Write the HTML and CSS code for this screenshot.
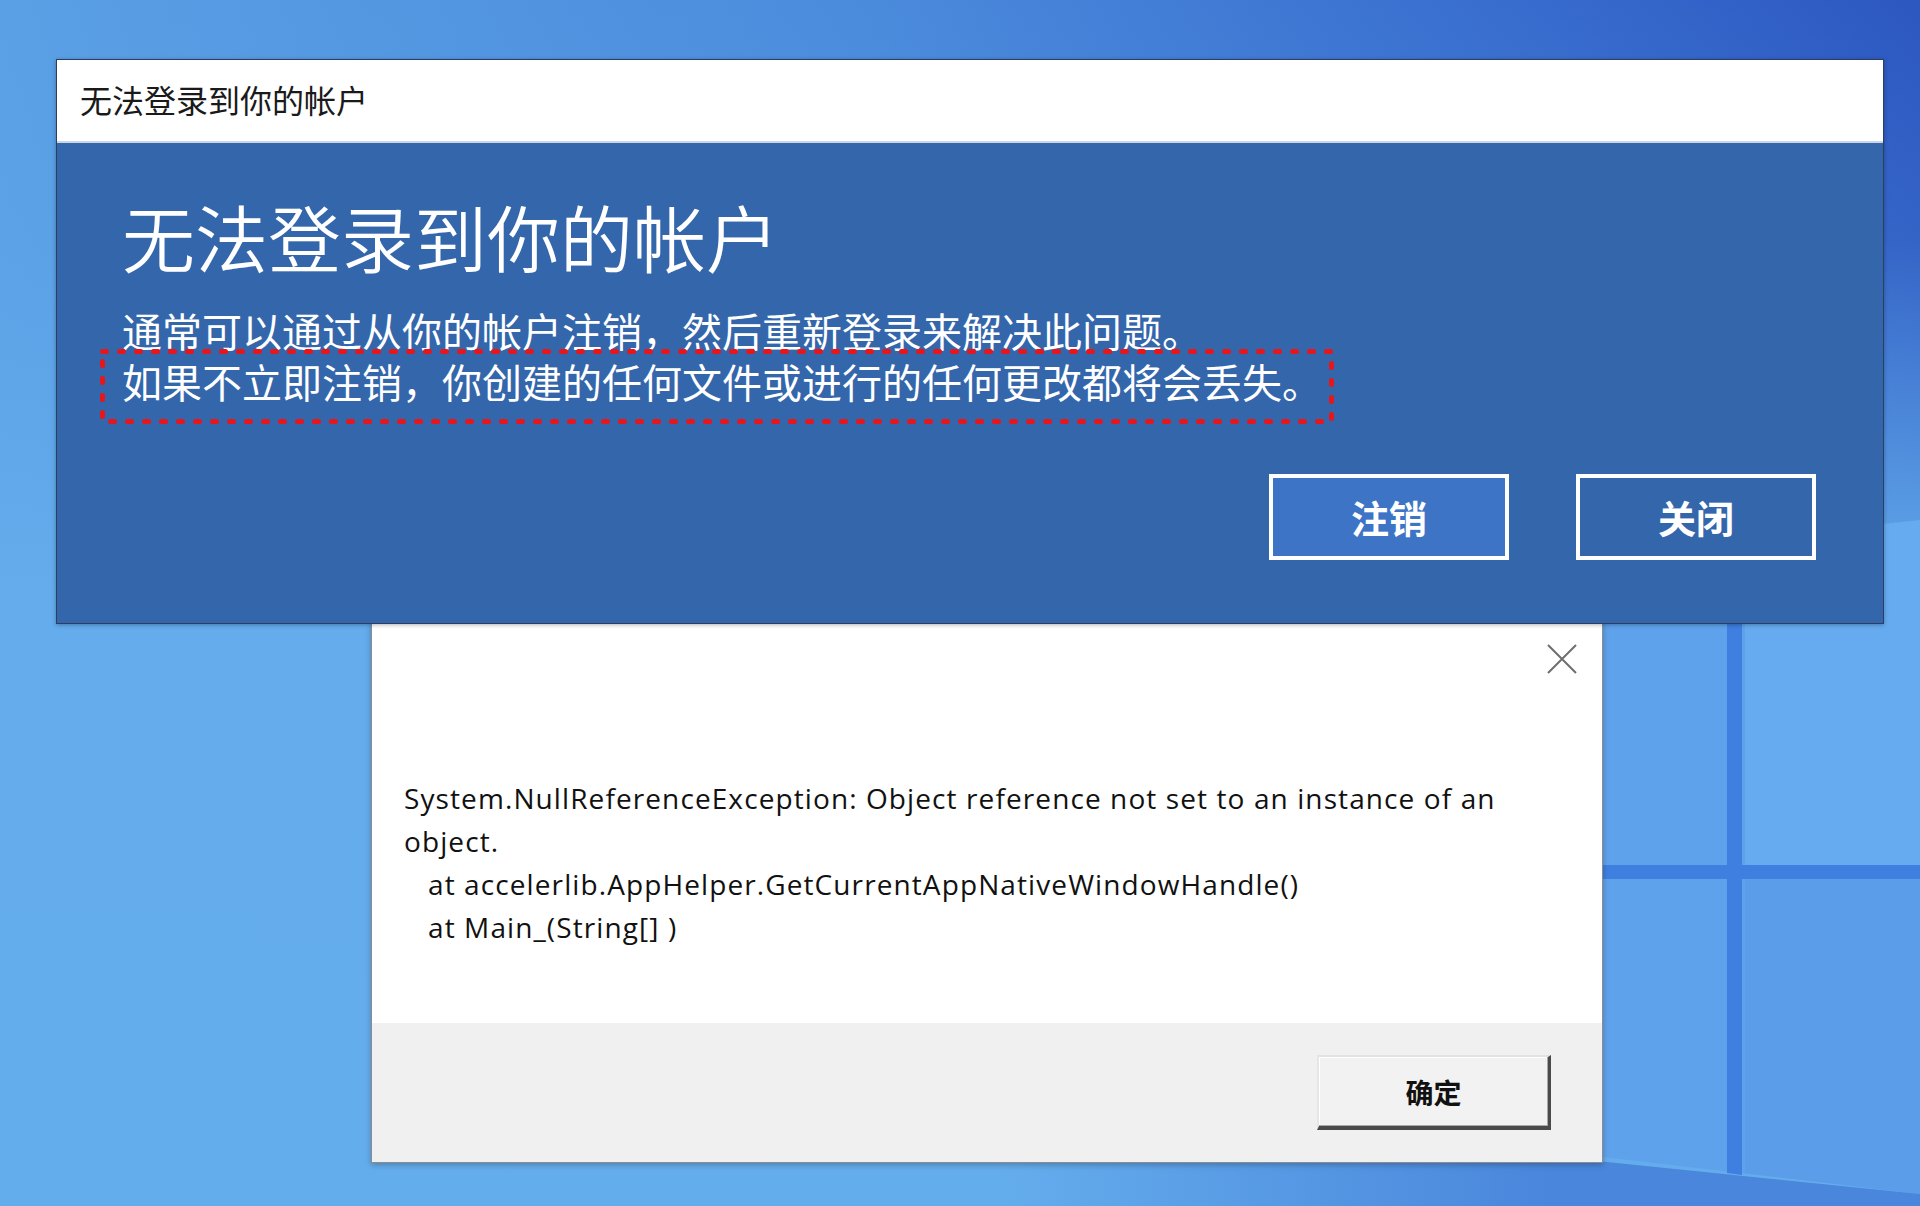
FILE: index.html
```html
<!DOCTYPE html>
<html lang="zh-CN">
<head>
<meta charset="utf-8">
<title>无法登录到你的帐户</title>
<link rel="stylesheet" href="styles.css">
</head>
<body>
<div class="desktop">
  <svg class="wallpaper" viewBox="0 0 1920 1206" preserveAspectRatio="none" aria-hidden="true">
    <defs>
      <linearGradient id="sky" x1="0" y1="0" x2="1" y2="0">
        <stop offset="0" stop-color="#5aa0e5"/>
        <stop offset="0.45" stop-color="#4b8bdc"/>
        <stop offset="0.75" stop-color="#3a70d0"/>
        <stop offset="1" stop-color="#2c57c0"/>
      </linearGradient>
      <linearGradient id="fade" x1="0" y1="0" x2="0" y2="1">
        <stop offset="0" stop-color="#64acec" stop-opacity="0"/>
        <stop offset="0.2" stop-color="#64acec" stop-opacity="0.15"/>
        <stop offset="0.5" stop-color="#64acec" stop-opacity="1"/>
        <stop offset="1" stop-color="#64adec" stop-opacity="1"/>
      </linearGradient>
      <linearGradient id="floor" x1="0" y1="0" x2="1" y2="0">
        <stop offset="0" stop-color="#4a86dc" stop-opacity="0"/>
        <stop offset="0.6" stop-color="#4a86dc" stop-opacity="1"/>
        <stop offset="1" stop-color="#4a86dc" stop-opacity="1"/>
      </linearGradient>
    </defs>
    <rect width="1920" height="1206" fill="url(#sky)"/>
    <rect width="1920" height="1206" fill="url(#fade)"/>
    <polygon points="1500,560 1920,520 1920,1194 1500,1145" fill="#5fa2ec"/>
    <polygon points="1745,540 1920,520 1920,865 1745,865" fill="#66abef"/>
    <polygon points="1745,879 1920,879 1920,1194 1745,1173" fill="#5b9de9"/>
    <polygon points="1727,540 1742,538 1742,1175 1727,1173" fill="#3f7fe0"/>
    <rect x="1500" y="865" width="420" height="14" fill="#3f7fe0"/>
    <polygon points="1000,1100 1920,1194 1920,1206 1000,1206" fill="url(#floor)"/>
  </svg>

  <section class="win err">
    <div class="err-body">
      <div class="err-head">
        <button class="close" aria-label="关闭">
          <svg viewBox="0 0 30 30" width="30" height="30"><path d="M1 1 L29 29 M29 1 L1 29" stroke="#6e6e6e" stroke-width="2" fill="none"/></svg>
        </button>
      </div>
      <div class="msg">
        <p class="exc">System.NullReferenceException: Object reference not set to an instance of an object.</p>
        <p class="frame">at accelerlib.AppHelper.GetCurrentAppNativeWindowHandle()</p>
        <p class="frame">at Main_(String[] )</p>
      </div>
    </div>
    <div class="err-foot">
      <button class="ok">确定</button>
    </div>
  </section>

  <section class="win signin">
    <header class="titlebar">无法登录到你的帐户</header>
    <div class="signin-body">
      <h1 class="heading">无法登录到你的帐户</h1>
      <div class="desc">
        <p>通常可以通过从你的帐户注销，然后重新登录来解决此问题。</p>
        <p class="warn">如果不立即注销，你创建的任何文件或进行的任何更改都将会丢失。<svg class="mark" width="1234" height="75" aria-hidden="true"><rect x="2.5" y="2.5" width="1229" height="70" fill="none" stroke="#e8161b" stroke-width="5" stroke-dasharray="4 13" stroke-linecap="round"/></svg></p>
      </div>
      <div class="actions">
        <button class="btn primary">注销</button>
        <button class="btn">关闭</button>
      </div>
    </div>
  </section>
</div>
</body>
</html>
```

FILE: styles.css
```css
html, body {
  margin: 0;
  padding: 0;
  width: 1920px;
  height: 1206px;
  overflow: hidden;
  background: #4f91de;
}

.desktop {
  position: relative;
  width: 1920px;
  height: 1206px;
  overflow: hidden;
}

.wallpaper {
  position: absolute;
  left: 0;
  top: 0;
  width: 1920px;
  height: 1206px;
  display: block;
}

.win {
  position: absolute;
  box-sizing: border-box;
}

/* ---------- sign-in dialog ---------- */
.signin {
  left: 56px;
  top: 59px;
  width: 1828px;
  height: 565px;
  border: 1px solid #2a3f63;
  background: #3466ab;
  display: flex;
  flex-direction: column;
  box-shadow: 0 1px 4px rgba(0, 0, 0, 0.3);
  z-index: 2;
}

.titlebar {
  box-sizing: border-box;
  height: 83px;
  background: #fff;
  border-bottom: 2px solid #c9d6e8;
  display: flex;
  align-items: center;
  padding-left: 23px;
  padding-bottom: 3px;
  font: 400 32px/1 "Noto Sans CJK SC", sans-serif;
  color: #1a1a1a;
}

.signin-body {
  flex: 1;
  display: flex;
  flex-direction: column;
  padding: 55px 67px 0 65px;
  color: #fff;
  font-family: "Noto Sans CJK SC", sans-serif;
}

.heading {
  margin: 0;
  font-weight: 350;
  font-size: 73px;
  line-height: 74px;
  color: #fff;
}

.desc {
  margin-top: 33px;
}

.desc p {
  margin: 0;
  font-size: 40px;
  line-height: 51px;
  font-weight: 400;
  white-space: nowrap;
}

.warn {
  position: relative;
}

.mark {
  position: absolute;
  left: -22px;
  top: -7px;
}

.actions {
  margin-top: 67px;
  display: flex;
  justify-content: flex-end;
  gap: 67px;
}

.btn {
  box-sizing: border-box;
  width: 240px;
  height: 86px;
  border: 4px solid #fff;
  background: #3466ab;
  color: #fff;
  font: 700 38px/1 "Noto Sans CJK SC", sans-serif;
  padding: 0;
}

.btn.primary {
  background: #3d74c6;
}

/* ---------- error dialog ---------- */
.err {
  left: 371px;
  top: 600px;
  width: 1232px;
  height: 563px;
  border: 1px solid #8c8c8c;
  background: #fff;
  display: flex;
  flex-direction: column;
  box-shadow: 0 2px 6px rgba(0, 0, 0, 0.25);
  z-index: 1;
}

.err-body {
  flex: 1;
  display: flex;
  flex-direction: column;
}

.err-head {
  display: flex;
  justify-content: flex-end;
  padding: 43px 25px 0 0;
}

.close {
  width: 30px;
  height: 30px;
  padding: 0;
  border: 0;
  background: transparent;
  display: block;
}

.close svg {
  display: block;
}

.msg {
  margin-top: 103px;
  padding-left: 32px;
  width: 1130px;
  font: 400 28px/43px "Open Sans", "Noto Sans", sans-serif;
  letter-spacing: 1.1px;
  color: #111;
}

.msg p {
  margin: 0;
}

.msg .frame {
  padding-left: 24px;
}

.err-foot {
  height: 139px;
  box-sizing: border-box;
  background: #f0f0f0;
  display: flex;
  justify-content: flex-end;
  align-items: flex-start;
  padding: 32px 51px 0 0;
}

.ok {
  box-sizing: border-box;
  width: 234px;
  height: 75px;
  background: #f2f2f2;
  border-top: 2px solid #e2e2e2;
  border-left: 2px solid #e6e6e6;
  border-right: 3px solid #4a4a4a;
  border-bottom: 4px solid #4a4a4a;
  box-shadow: inset -1px -1px 0 #a8a8a8, inset 1px 1px 0 #fff;
  font: 700 28px/1 "Noto Sans CJK SC", sans-serif;
  color: #111;
  padding: 0;
}
```
